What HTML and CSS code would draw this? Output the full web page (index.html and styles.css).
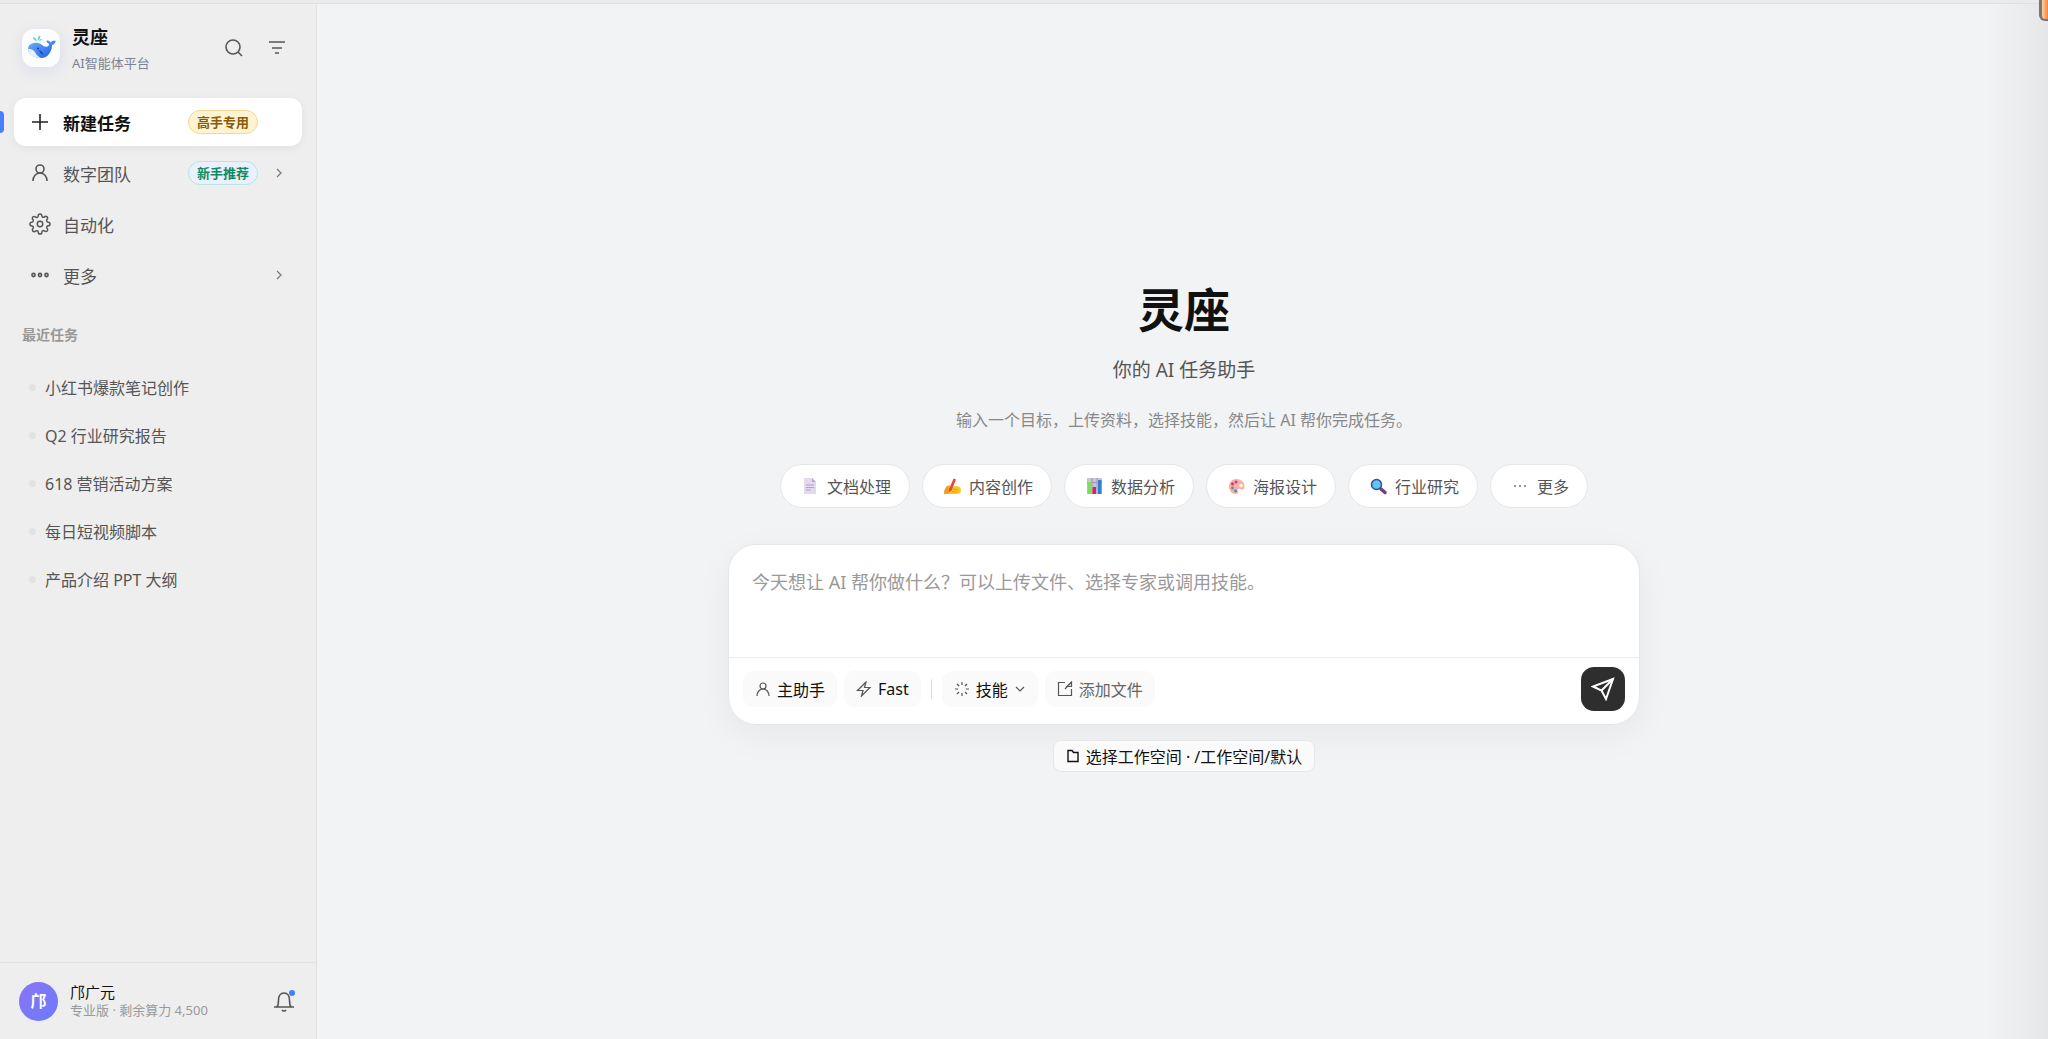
FILE: index.html
```html
<!DOCTYPE html>
<html lang="zh-CN">
<head>
  <meta charset="UTF-8">
  <meta name="viewport" content="width=device-width, initial-scale=1.0">
  <title>灵座</title>
  <link rel="stylesheet" href="styles.css">
</head>
<body>
  <div class="titlebar"></div>
  <div class="app">
    <!-- 侧边栏 -->
    <aside class="sidebar">
      <header class="brand">
        <span class="brand-logo">
          <svg viewBox="0 0 38 38" width="38" height="38" aria-hidden="true">
            <defs>
              <linearGradient id="whale" x1="0" y1="0" x2="1" y2="1">
                <stop offset="0" stop-color="#6bb4fb"/>
                <stop offset="1" stop-color="#2257e0"/>
              </linearGradient>
            </defs>
            <path d="M15 12c-3-.4-4-2-4-4 2 .4 3.600 1.500 4 4zM16 11.500c-.8-2.400.2-4.200 2-5 .8 2 .2 4-2 5zM17 12c.6-1.600 1.600-2.200 3-2-.4 1.400-1.400 2-3 2z" fill="#5fd6cf"/>
            <path d="M6 20c0-4 4-6.500 8.500-6.200 4.500.2 6.500 4 9.500 4 2.200 0 3-1.200 3.200-3-1.700-.5-2.700-1.500-2.700-3.300 2 0 3.300.6 4.200 1.900.9-1.300 2.600-2 5-1.700-.2 2.300-1.600 3.800-3.700 4.200.2 6.600-4.500 13.100-10.500 13.100C13 29 6 26 6 20z" fill="url(#whale)"/>
            <path d="M6 20c3 0 5 .5 6.500 2.500 1.300 1.800 2.500 4.500 6 6.400C12 29 6 25.500 6 20z" fill="#e8f2ff"/>
            <path d="M17 21c2 .5 4 2.300 4.500 5-2.500-.6-4.200-2.400-4.500-5z" fill="#1b49c4"/>
            <circle cx="16" cy="19.500" r="1" fill="#163a8f"/>
          </svg>
        </span>
        <div class="brand-text">
          <strong class="brand-name">灵座</strong>
          <span class="brand-sub">AI智能体平台</span>
        </div>
        <button class="icon-btn" type="button" aria-label="搜索">
          <svg viewBox="0 0 20 20" width="20" height="20"><circle cx="9" cy="9" r="7"/><path d="M14 14l4 4"/></svg>
        </button>
        <button class="icon-btn" type="button" aria-label="筛选">
          <svg viewBox="0 0 20 20" width="20" height="20"><path d="M2 4h16M5 10h10M8 15h4"/></svg>
        </button>
      </header>

      <nav class="nav">
        <a class="nav-item active" href="#">
          <svg viewBox="0 0 22 22" width="22" height="22"><path d="M11 3v16M3 11h16"/></svg>
          <span>新建任务</span>
          <em class="tag tag-gold">高手专用</em>
        </a>
        <a class="nav-item" href="#">
          <svg viewBox="0 0 22 22" width="22" height="22"><circle cx="11" cy="7" r="4"/><path d="M4 19c0-4.500 3-8 7-8s7 3.500 7 8"/></svg>
          <span>数字团队</span>
          <em class="tag tag-green">新手推荐</em>
          <svg class="arrow" viewBox="0 0 16 16" width="16" height="16"><path d="M6 4l4 4-4 4"/></svg>
        </a>
        <a class="nav-item" href="#">
          <svg viewBox="0 0 24 24" width="22" height="22"><circle cx="12" cy="12" r="3"/><path d="M19.4 15a1.65 1.65 0 0 0 .33 1.82l.06.06a2 2 0 0 1 0 2.83 2 2 0 0 1-2.83 0l-.06-.06a1.65 1.65 0 0 0-1.82-.33 1.65 1.65 0 0 0-1 1.51V21a2 2 0 0 1-2 2 2 2 0 0 1-2-2v-.09A1.65 1.65 0 0 0 9 19.4a1.65 1.65 0 0 0-1.82.33l-.06.06a2 2 0 0 1-2.83 0 2 2 0 0 1 0-2.83l.06-.06a1.65 1.65 0 0 0 .33-1.82 1.65 1.65 0 0 0-1.51-1H3a2 2 0 0 1-2-2 2 2 0 0 1 2-2h.09A1.65 1.65 0 0 0 4.6 9a1.65 1.65 0 0 0-.33-1.82l-.06-.06a2 2 0 0 1 0-2.83 2 2 0 0 1 2.83 0l.06.06a1.65 1.65 0 0 0 1.82.33H9a1.65 1.65 0 0 0 1-1.51V3a2 2 0 0 1 2-2 2 2 0 0 1 2 2v.09a1.65 1.65 0 0 0 1 1.51 1.65 1.65 0 0 0 1.82-.33l.06-.06a2 2 0 0 1 2.83 0 2 2 0 0 1 0 2.83l-.06.06a1.65 1.65 0 0 0-.33 1.82V9a1.65 1.65 0 0 0 1.51 1H21a2 2 0 0 1 2 2 2 2 0 0 1-2 2h-.09a1.65 1.65 0 0 0-1.51 1z"/></svg>
          <span>自动化</span>
        </a>
        <a class="nav-item" href="#">
          <svg viewBox="0 0 22 22" width="22" height="22"><circle cx="4.500" cy="11" r="1.600"/><circle cx="11" cy="11" r="1.600"/><circle cx="17.500" cy="11" r="1.600"/></svg>
          <span>更多</span>
          <svg class="arrow" viewBox="0 0 16 16" width="16" height="16"><path d="M6 4l4 4-4 4"/></svg>
        </a>
      </nav>

      <section class="recent">
        <h2>最近任务</h2>
        <ul>
          <li><a href="#">小红书爆款笔记创作</a></li>
          <li><a href="#">Q2 行业研究报告</a></li>
          <li><a href="#">618 营销活动方案</a></li>
          <li><a href="#">每日短视频脚本</a></li>
          <li><a href="#">产品介绍 PPT 大纲</a></li>
        </ul>
      </section>

      <footer class="user">
        <span class="avatar">邝</span>
        <div class="user-text">
          <span class="user-name">邝广元</span>
          <span class="user-plan">专业版 · 剩余算力 4,500</span>
        </div>
        <button class="icon-btn bell" type="button" aria-label="通知">
          <svg viewBox="0 0 22 22" width="22" height="22"><path d="M1 17h20M4 17c1.500-2 1.500-4 1.500-7 0-4 2-7 5.500-7s5.500 3 5.500 7c0 3 0 5 1.500 7M9 20c.8 1.300 3.200 1.300 4 0"/></svg>
        </button>
      </footer>
    </aside>

    <!-- 主区域 -->
    <main class="main">
      <h1>灵座</h1>
      <p class="subtitle">你的 AI 任务助手</p>
      <p class="desc">输入一个目标，上传资料，选择技能，然后让 AI 帮你完成任务。</p>

      <div class="chips">
        <button class="chip" type="button">
          <svg viewBox="0 0 22 18" width="22" height="18"><path d="M5 1h8l4 4v12H5z" fill="#e4daf0"/><path d="M13 1l4 4h-4z" fill="#b9a5d0"/><path d="M7 8h8M7 10.500h8M7 13h5" stroke="#b3a5c4"/></svg>
          文档处理
        </button>
        <button class="chip" type="button">
          <svg viewBox="0 0 22 18" width="22" height="18"><path d="M3 17c0-3 1-6 3-8l3-1 2 2 4-1c3 0 5 2 5 4.500S18 17 15 17z" fill="#fcc51f"/><path d="M3 17c0-3 1-6 3-8l3 1-2 7z" fill="#f59b2b"/><path d="M8 12.500L12.500 1.500l2.500 1-4.500 11-3 2z" fill="#ef4335"/><path d="M12 12.500c2-1 4 0 5 1M11 15c2-.6 4-.4 5 .4" stroke="#e79c12"/></svg>
          内容创作
        </button>
        <button class="chip" type="button">
          <svg viewBox="0 0 22 18" width="22" height="18"><path d="M4 1h15v16H4z" fill="#c9c3d4"/><path d="M4 5.500h15M9 1v16M14 1v16" stroke="#a49bb5"/><path d="M4.500 5H8v12H4.500z" fill="#7fdc5c"/><path d="M9.500 10H13v7H9.500z" fill="#dd1f66"/><path d="M15 3h3.500v14H15z" fill="#2f7fd8"/></svg>
          数据分析
        </button>
        <button class="chip" type="button">
          <svg viewBox="0 0 22 18" width="22" height="18"><path d="M11 2c5 0 8.500 3 8.500 7S17 13 15 12c-2-.6-3 .6-2 2 1 1.600 0 3-2 3-4 0-7-3.500-7-7.500S7 2 11 2z" fill="#ffae9f"/><circle cx="16" cy="8.500" r="1.800" fill="#fff"/><circle cx="11" cy="5" r="1.500" fill="#a641d8"/><circle cx="7.500" cy="7" r="1.400" fill="#d32c5d"/><circle cx="7.500" cy="11" r="1.400" fill="#27a6a0"/><circle cx="10.500" cy="14" r="1.400" fill="#3f82e8"/></svg>
          海报设计
        </button>
        <button class="chip" type="button">
          <svg viewBox="0 0 22 18" width="22" height="18"><path d="M14 12l4 3.500" stroke="#763f83" stroke-width="3.500" stroke-linecap="round"/><circle cx="9.500" cy="7.500" r="5" fill="#5cc8f2" stroke="#34509a" stroke-width="1.500"/></svg>
          行业研究
        </button>
        <button class="chip" type="button">
          <svg viewBox="0 0 22 18" width="22" height="18"><path d="M5 9h2M10 9h2M15 9h2" stroke="#777" stroke-width="1.500"/></svg>
          更多
        </button>
      </div>

      <form class="composer">
        <textarea aria-label="任务内容" placeholder="今天想让 AI 帮你做什么？可以上传文件、选择专家或调用技能。"></textarea>
        <div class="toolbar">
          <button class="tool" type="button">
            <svg viewBox="0 0 16 16" width="16" height="16"><circle cx="8" cy="5" r="3"/><path d="M2 15c0-4 2.500-7 6-7s6 3 6 7"/></svg>
            主助手
          </button>
          <button class="tool" type="button">
            <svg viewBox="0 0 16 16" width="16" height="16"><path d="M10 1L1.500 9.500H7L5.500 15 14 6.500H8.500z"/></svg>
            Fast
          </button>
          <span class="divider"></span>
          <button class="tool" type="button">
            <svg viewBox="0 0 16 16" width="16" height="16"><path d="M8 1v3M8 12v3M1 8h3M12 8h3M3 3l2 2M11 11l2 2M3 13l2-2M11 5l2-2"/></svg>
            技能
            <svg viewBox="0 0 12 16" width="12" height="16"><path d="M2 6l4 4 4-4"/></svg>
          </button>
          <button class="tool muted" type="button">
            <svg viewBox="0 0 16 16" width="16" height="16"><path d="M8 1.500H1.500v13h13V8M8 8l6-6.500M10 5.500h4.500V1z"/></svg>
            添加文件
          </button>
          <button class="send" type="submit" aria-label="发送">
            <svg viewBox="0 0 24 24" width="24" height="24"><path d="M22 2L2 9.500l8.500 4L15 22z"/><path d="M22 2L10.500 13.500"/></svg>
          </button>
        </div>
      </form>

      <button class="workspace" type="button">
        <svg viewBox="0 0 14 14" width="14" height="14"><path d="M2 1.500h4l1.500 2H12v9H2z"/></svg>
        选择工作空间 · /工作空间/默认
      </button>
    </main>
  </div>
  <div class="edge-shade"></div>
  <div class="edge-handle"></div>
</body>
</html>
```

FILE: styles.css
```css
* {
  box-sizing: border-box;
}

body {
  margin: 0;
  height: 100vh;
  display: flex;
  flex-direction: column;
  overflow: hidden;
  background: #f2f3f5;
  color: #111;
  font-family: "Noto Sans", "Noto Sans CJK SC", sans-serif;
  font-size: 16px;
}

a {
  color: inherit;
  text-decoration: none;
}

button {
  font: inherit;
  color: inherit;
  border: none;
  background: none;
  padding: 0;
  cursor: pointer;
}

svg {
  display: block;
  flex: none;
  fill: none;
}

.titlebar {
  height: 4px;
  background: #ebebec;
  border-bottom: 1px solid #e0e0e0;
}

.app {
  flex: 1;
  display: flex;
  min-height: 0;
}

/* 侧边栏 */
.sidebar {
  width: 317px;
  flex: none;
  display: flex;
  flex-direction: column;
  background: #eee;
  border-right: 1px solid #e2e2e3;
}

.brand {
  display: flex;
  align-items: center;
  padding: 18px 18px 0 22px;
  height: 70px;
}

.brand-logo {
  border-radius: 12px;
  background: #fcfdff;
  box-shadow: 0 4px 16px rgba(90, 110, 240, 0.12);
}

.brand-text {
  flex: 1;
  display: flex;
  flex-direction: column;
  margin-left: 12px;
  padding-top: 4px;
}

.brand-name {
  font-size: 18px;
  line-height: 26px;
}

.brand-sub {
  font-size: 13px;
  line-height: 26px;
  color: #7b8494;
}

.icon-btn {
  width: 43px;
  height: 36px;
  display: flex;
  align-items: center;
  justify-content: center;
}

.icon-btn svg,
.nav-item svg {
  stroke: #555;
  stroke-width: 1.6;
}

.nav {
  display: flex;
  flex-direction: column;
  gap: 3px;
  padding: 24px 14px 0;
}

.nav-item {
  position: relative;
  display: flex;
  align-items: center;
  height: 48px;
  padding: 0 15px;
  border-radius: 12px;
  font-size: 17px;
  color: #555;
}

.nav-item span {
  flex: 1;
  margin-left: 12px;
}

.nav-item.active {
  padding-right: 44px;
  background: #fff;
  color: #111;
  font-weight: 700;
  box-shadow: 0 2px 10px rgba(0, 0, 0, 0.06);
}

.nav-item.active svg {
  stroke: #222;
}

.nav-item.active::before {
  content: "";
  position: absolute;
  left: -14px;
  top: 13px;
  width: 4px;
  height: 22px;
  border-radius: 0 4px 4px 0;
  background: #4880ff;
}

.nav-item .arrow {
  margin-left: 13px;
  stroke: #777;
  stroke-width: 1.2;
}

.tag {
  width: 70px;
  height: 24px;
  border: 1px solid;
  border-radius: 12px;
  font-size: 13px;
  font-style: normal;
  font-weight: 700;
  line-height: 22px;
  text-align: center;
}

.tag-gold {
  color: #8a5a0c;
  background: #fff3d2;
  border-color: #f3d98f;
}

.tag-green {
  color: #0f8a5f;
  background: #e9f1fe;
  border-color: #b9e4e2;
}

.recent {
  flex: 1;
  padding: 24px 14px 0;
}

.recent h2 {
  margin: 0 0 16px;
  padding-left: 8px;
  font-size: 14px;
  line-height: 24px;
  color: #999;
}

.recent ul {
  margin: 0;
  padding: 0;
  list-style: none;
}

.recent a {
  display: flex;
  align-items: center;
  height: 48px;
  padding-left: 15px;
  color: #555;
}

.recent a::before {
  content: "";
  width: 7px;
  height: 7px;
  margin-right: 9px;
  border-radius: 50%;
  background: #e2e2e2;
}

.user {
  display: flex;
  align-items: center;
  height: 77px;
  padding: 0 11px 0 19px;
  border-top: 1px solid #e2e2e3;
}

.avatar {
  width: 39px;
  height: 39px;
  border-radius: 50%;
  background: linear-gradient(135deg, #8b74f6, #6a7cf9);
  color: #fff;
  font-weight: 700;
  line-height: 39px;
  text-align: center;
}

.user-text {
  flex: 1;
  display: flex;
  flex-direction: column;
  margin-left: 12px;
}

.user-name {
  font-size: 15px;
  line-height: 18px;
}

.user-plan {
  font-size: 13px;
  line-height: 18px;
  color: #999;
}

.bell {
  position: relative;
}

.bell::after {
  content: "";
  position: absolute;
  top: 7px;
  right: 10px;
  width: 6px;
  height: 6px;
  border-radius: 50%;
  background: #4080ff;
}

/* 主区域 */
.main {
  flex: 1;
  display: flex;
  flex-direction: column;
  align-items: center;
  justify-content: center;
  padding: 9px 22px 0 25px;
}

.main h1 {
  margin: 0;
  font-size: 46px;
  font-weight: 700;
  line-height: 56px;
}

.subtitle {
  margin: 19px 0 0;
  font-size: 19px;
  line-height: 28px;
  color: #555;
}

.desc {
  margin: 24px 0 0;
  line-height: 24px;
  color: #888;
}

.chips {
  display: flex;
  flex-wrap: wrap;
  justify-content: center;
  gap: 12px;
  margin-top: 32px;
}

.chip {
  display: flex;
  align-items: center;
  gap: 6px;
  height: 44px;
  padding: 0 18px;
  border: 1px solid #e5e6e8;
  border-radius: 22px;
  background: #fff;
  color: #555;
}

.composer {
  width: 100%;
  max-width: 912px;
  margin-top: 36px;
  border: 1px solid #e5e6e8;
  border-radius: 28px;
  background: #fff;
  box-shadow: 0 10px 36px rgba(0, 0, 0, 0.05);
}

.composer textarea {
  display: block;
  width: 100%;
  height: 112px;
  padding: 22px 23px;
  border: none;
  outline: none;
  resize: none;
  background: none;
  font: inherit;
  font-size: 18px;
  line-height: 30px;
}

.composer textarea::placeholder {
  color: #999;
}

.toolbar {
  display: flex;
  align-items: center;
  gap: 7px;
  padding: 9px 14px 13px;
  border-top: 1px solid #ececec;
}

.tool {
  display: flex;
  align-items: center;
  gap: 6px;
  height: 36px;
  padding: 0 12px;
  border-radius: 10px;
  background: #fafafa;
}

.tool svg {
  stroke: #555;
  stroke-width: 1.2;
}

.tool.muted {
  color: #666;
}

.divider {
  width: 1px;
  height: 20px;
  margin: 0 3px;
  background: #ddd;
}

.send {
  display: flex;
  align-items: center;
  justify-content: center;
  width: 44px;
  height: 44px;
  margin-left: auto;
  border-radius: 13px;
  background: #2e2e2e;
}

.send svg {
  stroke: #fff;
  stroke-width: 2;
}

.workspace {
  display: flex;
  align-items: center;
  gap: 6px;
  height: 32px;
  margin-top: 15px;
  padding: 0 12px;
  border: 1px solid #e5e6e8;
  border-radius: 8px;
  background: #fafafa;
}

.workspace svg {
  stroke: #111;
  stroke-width: 1.4;
}

/* 窗口右侧边缘 */
.edge-shade {
  position: absolute;
  top: 4px;
  right: 0;
  bottom: 0;
  width: 64px;
  background: linear-gradient(90deg, rgba(0, 0, 0, 0), rgba(0, 0, 0, 0.05));
  pointer-events: none;
}

.edge-handle {
  position: absolute;
  top: 0;
  right: 0;
  width: 9px;
  height: 21px;
  border: 2px solid #777;
  border-width: 0 0 2px 3px;
  border-radius: 0 0 0 6px;
  background: linear-gradient(90deg, #ffd0a8, #f98236);
}
```
